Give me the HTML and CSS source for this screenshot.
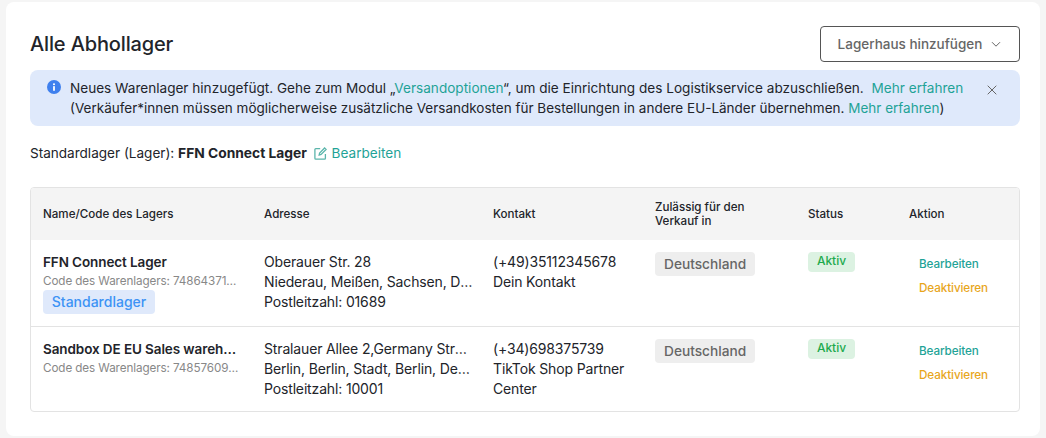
FILE: index.html
```html
<!DOCTYPE html>
<html lang="de">
<head>
  <meta charset="UTF-8">
  <title>Alle Abhollager</title>
  <link rel="stylesheet" href="styles.css">
</head>
<body>

<main class="card">
  <div class="head">
    <h1>Alle Abhollager</h1>
    <button class="add-btn">Lagerhaus hinzufügen
      <svg width="12" height="12" viewBox="0 0 12 12" fill="none" stroke="#666" stroke-width="1"><path d="M2 4.2 6 8.2 10 4.2"/></svg>
    </button>
  </div>

  <div class="notice">
    <svg class="notice-icon" width="14" height="14" viewBox="0 0 14 14"><circle cx="7" cy="7" r="7" fill="#3f80ee"/><rect x="6.1" y="6" width="1.8" height="4.8" rx=".4" fill="#fff"/><circle cx="7" cy="4.2" r="1.05" fill="#fff"/></svg>
    <p><span class="first-line">Neues Warenlager hinzugefügt. Gehe zum Modul „<a>Versandoptionen</a>“, um die Einrichtung des Logistikservice abzuschließen. <a class="more">Mehr erfahren</a></span><br>(Verkäufer*innen müssen möglicherweise zusätzliche Versandkosten für Bestellungen in andere EU-Länder übernehmen. <a>Mehr erfahren</a>)</p>
    <svg class="notice-close" width="10" height="10" viewBox="0 0 10 10" stroke="#666" stroke-width="1"><path d="M.7.7 9.3 9.3M9.3.7.7 9.3"/></svg>
  </div>

  <div class="default-line">
    Standardlager (Lager): <b>FFN Connect Lager</b>
    <a class="edit">
      <svg width="13" height="13" viewBox="0 0 13 13" fill="none" stroke="#5bb5ab" stroke-width="1.3"><path d="M11.4 7v4.2a.9.9 0 0 1-.9.9H1.8a.9.9 0 0 1-.9-.9V2.6a.9.9 0 0 1 .9-.9h4.4"/><path d="M5.2 8 5.6 6 10.6 1l1.5 1.5-5 5z"/></svg>
      Bearbeiten
    </a>
  </div>

  <div class="table-wrap">
    <table>
      <colgroup>
        <col class="c-name"><col class="c-addr"><col class="c-contact"><col class="c-sale"><col class="c-status"><col>
      </colgroup>
      <thead>
        <tr>
          <th>Name/Code des Lagers</th>
          <th>Adresse</th>
          <th>Kontakt</th>
          <th>Zulässig für den Verkauf in</th>
          <th>Status</th>
          <th>Aktion</th>
        </tr>
      </thead>
      <tbody>
        <tr class="row-first">
          <td>
            <div class="name">FFN Connect Lager</div>
            <div class="code">Code des Warenlagers: 748643719203</div>
            <span class="tag-default">Standardlager</span>
          </td>
          <td class="addr">
            <div class="line">Oberauer Str. 28</div>
            <div class="line">Niederau, Meißen, Sachsen, Deutschland</div>
            <div class="line">Postleitzahl: 01689</div>
          </td>
          <td>(+49)35112345678<br>Dein Kontakt</td>
          <td><span class="tag-country">Deutschland</span></td>
          <td><span class="tag-status">Aktiv</span></td>
          <td class="actions"><a class="act-edit">Bearbeiten</a><a class="act-off">Deaktivieren</a></td>
        </tr>
        <tr>
          <td>
            <div class="name">Sandbox DE EU Sales warehouse</div>
            <div class="code">Code des Warenlagers: 748576091234</div>
          </td>
          <td class="addr">
            <div class="line">Stralauer Allee 2,Germany Straße</div>
            <div class="line">Berlin, Berlin, Stadt, Berlin, Deutschland</div>
            <div class="line">Postleitzahl: 10001</div>
          </td>
          <td>(+34)698375739<br>TikTok Shop Partner Center</td>
          <td><span class="tag-country">Deutschland</span></td>
          <td><span class="tag-status">Aktiv</span></td>
          <td class="actions"><a class="act-edit">Bearbeiten</a><a class="act-off">Deaktivieren</a></td>
        </tr>
      </tbody>
    </table>
  </div>
</main>

</body>
</html>
```

FILE: styles.css
```css
* {
  box-sizing: border-box;
  margin: 0;
  padding: 0;
}
html, body {
  height: 438px;
  overflow: hidden;
}
body {
  font-family: Inter, "Liberation Sans", sans-serif;
  font-size: 14px;
  line-height: 20px;
  color: #22242a;
  background: #f5f5f5;
  padding: 2px 6px;
}
a {
  color: #1fa397;
}

.card {
  background: #fff;
  border-radius: 8px;
  height: 434px;
  padding: 24px 20px 0 24px;
}

.head {
  display: flex;
  justify-content: space-between;
  align-items: center;
  height: 36px;
}
h1 {
  font-size: 20px;
  line-height: 28px;
  font-weight: 500;
  letter-spacing: -0.14px;
}
.add-btn {
  display: flex;
  align-items: center;
  justify-content: center;
  gap: 8px;
  width: 200px;
  height: 36px;
  border: 1px solid #555;
  border-radius: 4px;
  background: #fff;
  color: #666;
  font: 500 13.5px/20px Inter, "Liberation Sans", sans-serif;
}

.notice {
  display: flex;
  margin-top: 8px;
  height: 56px;
  padding: 8px 23px 8px 17px;
  background: #dfe9fb;
  border-radius: 8px;
  font-size: 13.5px;
}
.notice-icon {
  flex: none;
  margin: 2px 9px 0 0;
}
.notice p {
  flex: 1;
  white-space: nowrap;
}
.first-line {
  font-size: 13.58px;
}
.more {
  margin-left: 4px;
}
.notice-close {
  flex: none;
  margin-top: 7px;
}

.default-line {
  margin-top: 17px;
  height: 44px;
  font-size: 13.55px;
}
.default-line b {
  font-size: 13.8px;
  font-weight: 700;
}
.edit {
  margin-left: 3px;
  font-size: 13.6px;
}
.edit svg {
  vertical-align: -2px;
  margin-right: 1px;
}

.table-wrap {
  border: 1px solid #e3e3e3;
  border-radius: 4px;
  overflow: hidden;
}
table {
  width: 100%;
  table-layout: fixed;
  border-collapse: collapse;
}
.c-name { width: 221px; }
.c-addr { width: 229px; }
.c-contact { width: 162px; }
.c-sale { width: 153px; }
.c-status { width: 101px; }

th {
  height: 52px;
  padding: 0 12px;
  background: #f4f4f4;
  text-align: left;
  font-size: 11.6px;
  line-height: 14px;
  font-weight: 500;
}
td {
  padding: 12px;
  vertical-align: top;
  letter-spacing: -0.15px;
}
td.addr {
  padding-right: 7px;
}
.row-first td {
  height: 86px;
  border-bottom: 1px solid #e3e3e3;
}

.name {
  font-size: 13.5px;
  font-weight: 600;
  letter-spacing: -0.1px;
  white-space: nowrap;
  overflow: hidden;
  text-overflow: ellipsis;
}
.code {
  font-size: 11.7px;
  line-height: 18px;
  letter-spacing: -0.1px;
  color: #888;
  white-space: nowrap;
  overflow: hidden;
  text-overflow: ellipsis;
}
.line {
  white-space: nowrap;
  overflow: hidden;
  text-overflow: ellipsis;
}

.tag-default {
  display: block;
  width: 112px;
  height: 24px;
  line-height: 24px;
  text-align: center;
  background: #dfe9fb;
  border-radius: 4px;
  color: #3d93f5;
  font-weight: 500;
  letter-spacing: 0;
}
.tag-country {
  display: inline-block;
  height: 24px;
  line-height: 24px;
  padding: 0 9px;
  background: #eee;
  border-radius: 4px;
  color: #666;
  font-size: 13.7px;
  font-weight: 500;
  letter-spacing: 0;
}
.tag-status {
  display: block;
  width: 47px;
  height: 20px;
  text-align: center;
  background: #dcf2e2;
  border-radius: 4px;
  color: #1daa4e;
  font-size: 12px;
  line-height: 18px;
  font-weight: 500;
  letter-spacing: 0;
}

.actions a {
  display: block;
  margin-left: 10px;
  font-size: 11.7px;
  line-height: 24px;
  font-weight: 500;
  letter-spacing: -0.1px;
}
.act-off {
  color: #e8a61c;
}
```
